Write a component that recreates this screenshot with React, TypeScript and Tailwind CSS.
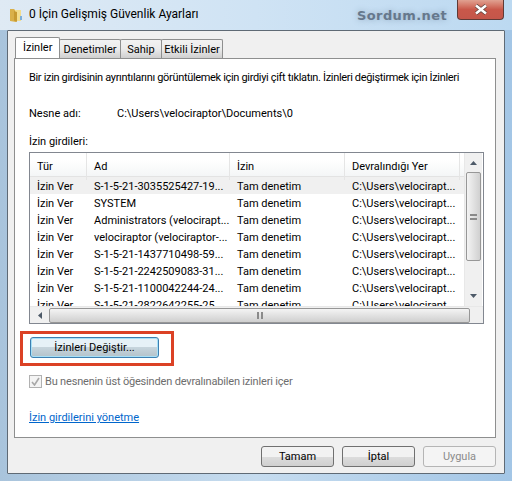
const rows = [
  ["S-1-5-21-3035525427-19..."],
  ["SYSTEM"],
  ["Administrators (velocirapt..."],
  ["velociraptor (velociraptor-..."],
  ["S-1-5-21-1437710498-59..."],
  ["S-1-5-21-2242509083-31..."],
  ["S-1-5-21-1100042244-24..."],
  ["S-1-5-21-2822642255-25..."],
];

function Tab({ label, w, active }: { label: string; w: string; active?: boolean }) {
  if (active) {
    return (
      <div className={`${w} h-[21px] -mb-px z-10 bg-white border border-b-0 border-[#8e8f8f] rounded-t-[2px] pl-[7px] leading-[19px] whitespace-nowrap`}>
        {label}
      </div>
    );
  }
  return (
    <div className={`${w} h-[19px] mt-[2px] -ml-px bg-gradient-to-b from-[#f2f2f2] via-[#ebebeb] to-[#cfcfcf] border border-b-0 border-[#8e8f8f] rounded-t-[2px] text-center leading-[20px] whitespace-nowrap`}>
      {label}
    </div>
  );
}

function DialogButton({ label, disabled }: { label: string; disabled?: boolean }) {
  return (
    <div
      className={
        disabled
          ? "w-[73px] h-[21px] rounded-[3px] border border-[#b5b5b5] bg-[#f4f4f4] text-[#8b8b8b] text-center leading-[19px]"
          : "w-[73px] h-[21px] rounded-[3px] border border-[#707070] bg-gradient-to-b from-[#f2f2f2] from-50% via-[#dddddd] via-50% to-[#cfcfcf] text-center leading-[19px]"
      }
    >
      {label}
    </div>
  );
}

export default function App() {
  return (
    <div className="relative w-[512px] h-[481px] overflow-hidden bg-gradient-to-r from-[#a9c4dc] via-[#c6dcef] to-[#a3c6e6] text-[11px] text-black font-['Roboto',sans-serif]">
      {/* title bar */}
      <div className="h-[30px] flex items-center pl-[9px] gap-[7px] bg-gradient-to-r from-[#dfeaf4] via-[#cfe3f4] to-[#bcd9f1]">
        <svg width="13" height="16" viewBox="0 0 13 16">
          <path d="M1 2h4l2 2v11L1 14z" fill="#d9b04a" />
          <path d="M6 3h6v11H6z" fill="#f3dd8d" />
          <path d="M5 4l3 1v10l-3-1.5z" fill="#c79a32" />
          <path d="M11 9h2v4h-2z" fill="#7fb0d8" />
        </svg>
        <span className="text-[12px] leading-none mt-[-2px]">0 İçin Gelişmiş Güvenlik Ayarları</span>
      </div>

      {/* client area */}
      <div className="mx-[7px] w-[498px] h-[444px] border border-[#5f6a75] rounded-[1px] bg-[#f0f0f0] pl-[6px] pt-[6px]">
        <div className="flex ml-[1px] relative">
          <Tab label="İzinler" w="w-[45px]" active />
          <Tab label="Denetimler" w="w-[62px]" />
          <Tab label="Sahip" w="w-[42px]" />
          <Tab label="Etkili İzinler" w="w-[62px]" />
        </div>
        <div className="w-[482px] h-[380px] border border-[#8e8f8f] bg-white pl-[14px] pt-[10px]">
          <p className="leading-[17px] whitespace-nowrap tracking-[-0.33px]">
            Bir izin girdisinin ayrıntılarını görüntülemek için girdiyi çift tıklatın. İzinleri değiştirmek için İzinleri
          </p>
          <div className="flex mt-[19px] leading-[17px]">
            <span className="w-[88px]">Nesne adı:</span>
            <span>C:\Users\velociraptor\Documents\0</span>
          </div>
          <p className="mt-[11px] leading-[17px]">İzin girdileri:</p>

          {/* list view */}
          <div className="mt-[2px] w-[455px] h-[172px] border border-[#828790] flex flex-col">
            <div className="flex h-[153px]">
              <div className="w-[434px] h-[153px] overflow-hidden">
                <div className="grid grid-cols-[57px_143px_115px_119px] h-[24px] bg-gradient-to-b from-white from-30% to-[#f4f6f7] border-b border-[#e3e3e3] leading-[27px]">
                  <div className="pl-[7px] border-r border-[#e5e5e5]">Tür</div>
                  <div className="pl-[7px] border-r border-[#e5e5e5]">Ad</div>
                  <div className="pl-[7px] border-r border-[#e5e5e5]">İzin</div>
                  <div className="pl-[7px] border-r border-[#e5e5e5] w-[115px]">Devralındığı Yer</div>
                </div>
                {rows.map(([name], i) => (
                  <div
                    key={name}
                    className={`grid grid-cols-[57px_143px_115px_119px] h-[17px] leading-[20px] whitespace-nowrap ${i === 0 ? "bg-[#f0f0f0]" : ""}`}
                  >
                    <div className="pl-[7px]">İzin Ver</div>
                    <div className="pl-[7px]">{name}</div>
                    <div className="pl-[7px]">Tam denetim</div>
                    <div className="pl-[7px]">C:\Users\velocirapt...</div>
                  </div>
                ))}
              </div>
              {/* vertical scrollbar */}
              <div className="w-[18px] h-[153px] bg-[#f0f0f0] flex flex-col items-center border-l border-[#e8e8e8]">
                <svg width="7" height="4" viewBox="0 0 7 4" className="mt-[8px]">
                  <path d="M3.5 0L7 4H0z" fill="#4d5a68" />
                </svg>
                <div className="mt-[7px] w-[15px] h-[89px] rounded-[2px] border border-[#979797] bg-gradient-to-r from-[#f4f4f4] to-[#d0d0d0] flex items-center justify-center">
                  <div className="w-[7px] h-[6px] border-y-2 border-double border-[#8a8a8a]" />
                </div>
                <svg width="7" height="4" viewBox="0 0 7 4" className="mt-[33px]">
                  <path d="M3.5 4L7 0H0z" fill="#4d5a68" />
                </svg>
              </div>
            </div>
            {/* horizontal scrollbar */}
            <div className="h-[17px] flex items-center bg-[#f0f0f0] border-t border-[#e8e8e8]">
              <svg width="4" height="7" viewBox="0 0 4 7" className="ml-[8px]">
                <path d="M0 3.5L4 0v7z" fill="#4d5a68" />
              </svg>
              <div className="ml-[7px] w-[421px] h-[15px] rounded-[2px] border border-[#979797] bg-gradient-to-b from-[#f4f4f4] to-[#cfcfcf] flex items-center justify-center">
                <div className="w-[6px] h-[7px] border-x-2 border-double border-[#8a8a8a]" />
              </div>
            </div>
          </div>

          {/* change permissions */}
          <div className="mt-[13px] ml-[1px] w-[129px] h-[21px] rounded-[3px] border border-[#3c7fb1] bg-gradient-to-b from-[#e6f1f7] from-45% via-[#c6d4dc] via-50% to-[#b4c3cb] shadow-[inset_0_0_0_1px_#a6e0f7] text-center leading-[19px]">
            İzinleri Değiştir...
          </div>

          <div className="mt-[15px] flex items-center gap-[3px] text-[#6d6d6d] leading-[17px] tracking-[-0.18px]">
            <div className="w-[13px] h-[13px] border border-[#b1b1b1] bg-[#f4f4f4] flex items-center justify-center">
              <svg width="9" height="9" viewBox="0 0 9 9">
                <path d="M1 5l2.5 3L8 1" fill="none" stroke="#a8a8a8" strokeWidth="1.6" />
              </svg>
            </div>
            <span>Bu nesnenin üst öğesinden devralınabilen izinleri içer</span>
          </div>

          <p className="mt-[19px] text-[#0066cc] underline leading-[17px]">İzin girdilerini yönetme</p>
        </div>

        {/* dialog buttons */}
        <div className="flex gap-[8px] mt-[8px] ml-[247px]">
          <DialogButton label="Tamam" />
          <DialogButton label="İptal" />
          <DialogButton label="Uygula" disabled />
        </div>
      </div>

      {/* close button */}
      <div className="absolute left-[457px] top-0 w-[47px] h-[20px] rounded-b-[4px] border border-t-0 border-[#5f3a36] bg-gradient-to-b from-[#e0a191] via-[#c9584a] to-[#c4564a] flex items-center justify-center">
        <svg width="14" height="11" viewBox="0 0 14 11">
          <path d="M2 1.5L12 9.5M12 1.5L2 9.5" stroke="#59403c" strokeWidth="4" />
          <path d="M2 1.5L12 9.5M12 1.5L2 9.5" stroke="#ffffff" strokeWidth="2.6" />
        </svg>
      </div>

      {/* watermark */}
      <div className="absolute left-[357px] top-[7px] text-[13px] font-bold leading-[17px] tracking-[0.4px] text-[#66788c] font-['DejaVu_Sans',sans-serif] [text-shadow:0_0_6px_#8ea6be]">
        Sordum.net
      </div>

      {/* red annotation */}
      <div className="absolute left-[20px] top-[331px] w-[154px] h-[35px] border-[3px] border-[#db4125]" />
    </div>
  );
}
